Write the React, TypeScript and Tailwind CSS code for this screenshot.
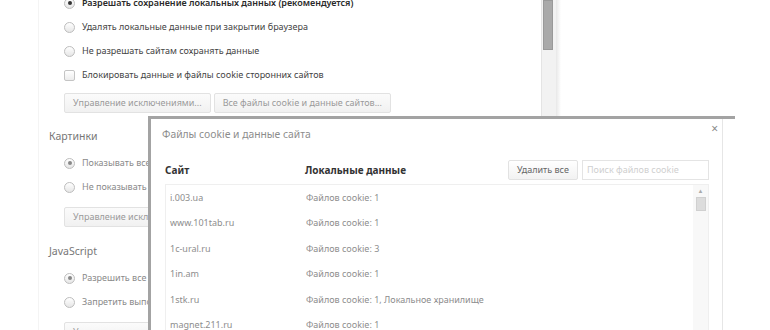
import React from 'react';

const rows = [
  { site: 'i.003.ua', data: 'Файлов cookie: 1' },
  { site: 'www.101tab.ru', data: 'Файлов cookie: 1' },
  { site: '1c-ural.ru', data: 'Файлов cookie: 3' },
  { site: '1in.am', data: 'Файлов cookie: 1' },
  { site: '1stk.ru', data: 'Файлов cookie: 1, Локальное хранилище' },
  { site: 'magnet.211.ru', data: 'Файлов cookie: 1' },
];

function Radio({ checked, dark }: { checked?: boolean; dark?: boolean }) {
  return (
    <span className="w-[11px] h-[11px] rounded-full border border-[#bdbdbd] bg-gradient-to-b from-white to-[#e6e6e6] flex items-center justify-center shrink-0">
      {checked && (
        <span className={`w-[4px] h-[4px] rounded-full ${dark ? 'bg-[#333]' : 'bg-[#888]'}`}></span>
      )}
    </span>
  );
}

function Option({ label, checked, dark, muted, box }: { label: string; checked?: boolean; dark?: boolean; muted?: boolean; box?: boolean }) {
  return (
    <div className="h-[24px] flex items-center gap-[7px] pl-[15px]">
      {box ? (
        <span className="w-[11px] h-[11px] rounded-[2px] border border-[#c4c4c4] bg-gradient-to-b from-white to-[#ececec] shrink-0"></span>
      ) : (
        <Radio checked={checked} dark={dark} />
      )}
      <span className={`whitespace-nowrap ${dark ? 'text-[#2a2a2a] font-semibold' : muted ? 'text-[#8a8a8a]' : 'text-[#444]'}`}>{label}</span>
    </div>
  );
}

function GreyButton({ children }: { children: React.ReactNode }) {
  return (
    <span className="h-[20px] px-[8px] flex items-center border border-[#e2e2e2] rounded-[2px] bg-gradient-to-b from-[#fbfbfb] to-[#f1f1f1] text-[#9a9a9a] whitespace-nowrap">
      {children}
    </span>
  );
}

export default function App() {
  return (
    <div className="relative w-[770px] h-[330px] overflow-hidden bg-white text-[9px]" style={{ fontFamily: '"Noto Sans", "Open Sans", sans-serif' }}>
      {/* Settings page behind */}
      <div className="flex h-full">
        <div className="w-[503px] ml-[38px] pl-[10px] border-l border-[#f4f4f4]">
          <div className="-mt-[9px]">
            <Option label="Разрешать сохранение локальных данных (рекомендуется)" checked dark />
            <Option label="Удалять локальные данные при закрытии браузера" />
            <Option label="Не разрешать сайтам сохранять данные" />
            <Option label="Блокировать данные и файлы cookie сторонних сайтов" box />
            <div className="flex gap-[3px] pl-[15px] mt-[6px]">
              <GreyButton>Управление исключениями...</GreyButton>
              <GreyButton>Все файлы cookie и данные сайтов...</GreyButton>
            </div>

            <div className="h-[20px] flex items-center mt-[14px] text-[10.5px] text-[#777]">Картинки</div>
            <div className="mt-[4px]">
              <Option label="Показывать все" checked muted />
              <Option label="Не показывать" muted />
            </div>
            <div className="flex pl-[15px] mt-[8px]">
              <GreyButton>Управление исключениями...</GreyButton>
            </div>

            <div className="h-[20px] flex items-center mt-[15px] text-[10.5px] text-[#777]">JavaScript</div>
            <div className="mt-[4px]">
              <Option label="Разрешить все" checked muted />
              <Option label="Запретить выполнение" muted />
            </div>
            <div className="flex pl-[15px] mt-[8px]">
              <GreyButton>Управление исключениями...</GreyButton>
            </div>
          </div>
        </div>
        {/* page scrollbar */}
        <div className="w-[15px] h-full bg-[#f2f2f2] border-l border-[#e4e4e4] pl-[1px] pr-[2px]">
          <div className="w-[10px] h-[50px] bg-[#a9a9a9] border border-[#999]"></div>
        </div>
        <div className="w-[5px] h-full bg-gradient-to-r from-[#e8e8e8] to-white"></div>
      </div>

      {/* Cookie dialog overlay */}
      <div className="absolute left-[148px] top-[116px] w-[587px] h-[214px] border-t-[3px] border-l-[3px] border-[#a3a3a3] bg-white">
        <div className="w-[572px] h-full border-r border-[#e6e6e6] pl-[14px] pr-[13px] flex flex-col">
          <div className="flex justify-between h-[30px] shrink-0">
            <span className="pt-[8px] -ml-[3px] text-[10.3px] text-[#8c8c8c]">Файлы cookie и данные сайта</span>
            <span className="pt-[4px] mr-[-9px] text-[12px] leading-none text-[#8a8a8a]">×</span>
          </div>

          <div className="h-[20px] mt-[11px] flex items-center shrink-0 text-[10px]">
            <span className="w-[140px] font-bold text-[#333]">Сайт</span>
            <span className="font-bold text-[#333]">Локальные данные</span>
            <div className="ml-auto flex gap-[4px] h-full text-[9px]">
              <span className="w-[70px] flex items-center justify-center border border-[#e2e2e2] rounded-[2px] bg-gradient-to-b from-white to-[#f2f2f2] text-[#666]">Удалить все</span>
              <span className="w-[127px] flex items-center pl-[4px] border border-[#e4e4e4] text-[#cfcfcf]">Поиск файлов cookie</span>
            </div>
          </div>

          <div className="mt-[4px] flex-1 min-h-0 overflow-hidden flex border border-[#efefef] border-b-0">
            <div className="flex-1">
              {rows.map((r) => (
                <div key={r.site} className="h-[25.4px] flex items-center pl-[4px] text-[9px] text-[#8d8d8d]">
                  <span className="w-[136px]">{r.site}</span>
                  <span className="whitespace-nowrap">{r.data}</span>
                </div>
              ))}
            </div>
            <div className="w-[15px] bg-[#f8f8f8] flex flex-col items-center pt-[3px]">
              <span className="text-[6px] leading-none text-[#aaa]">▲</span>
              <span className="w-[10px] h-[14px] mt-[3px] bg-[#dcdcdc] border border-[#d0d0d0]"></span>
            </div>
          </div>
        </div>
      </div>
    </div>
  );
}
